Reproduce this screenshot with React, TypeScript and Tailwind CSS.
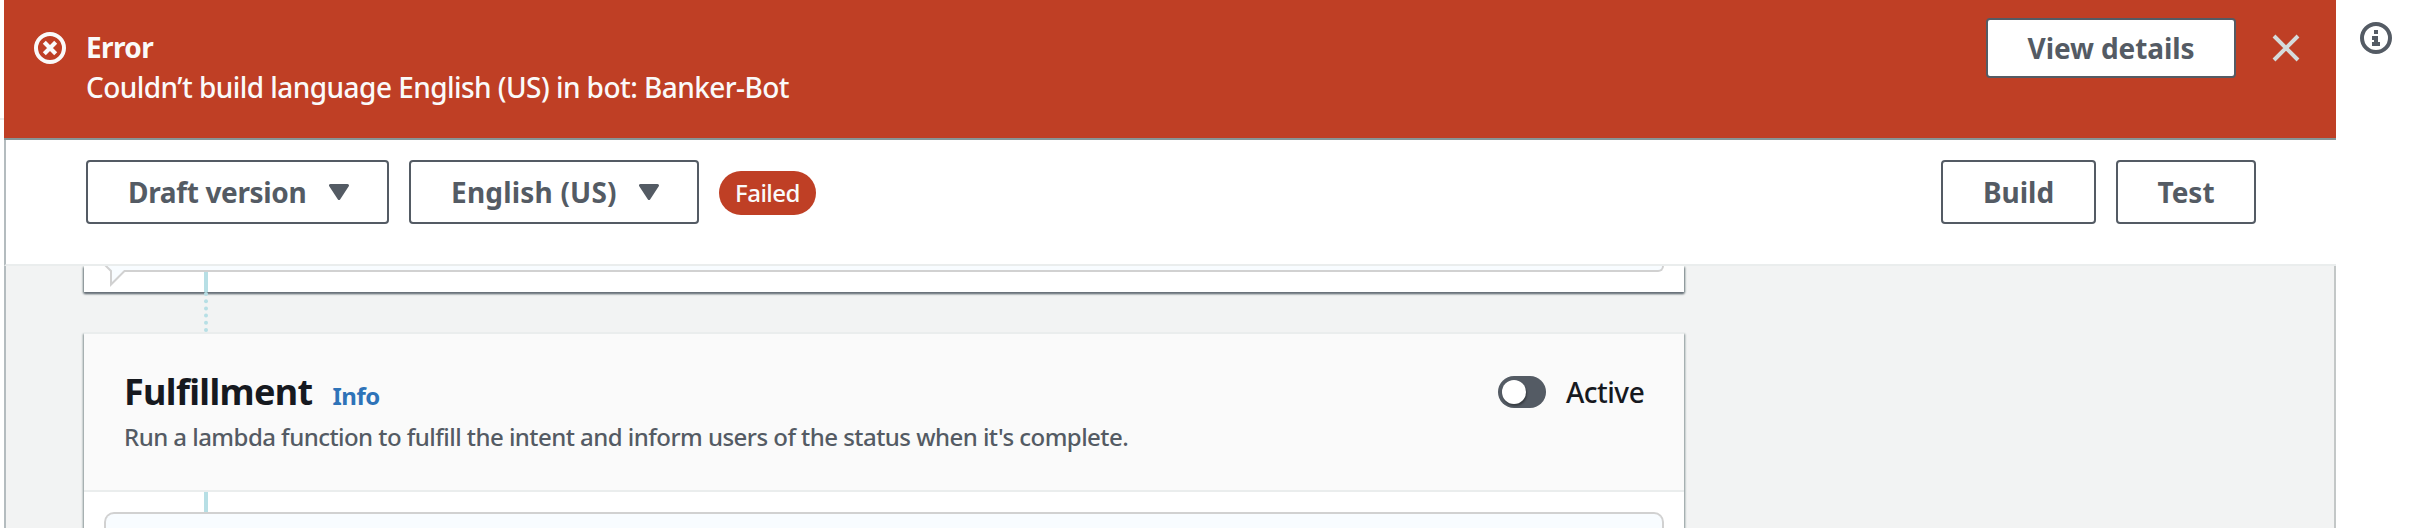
import type { ReactNode } from "react";

function ErrorIcon() {
  return (
    <svg className="mt-8 size-8 shrink-0" viewBox="0 0 32 32" fill="none" stroke="#fafafa">
      <circle cx="16" cy="16" r="14" strokeWidth="4" />
      <path d="M10.3 10.3 21.7 21.7 M21.7 10.3 10.3 21.7" strokeWidth="4.2" />
    </svg>
  );
}

function InfoIcon() {
  return (
    <svg className="size-8" viewBox="0 0 32 32" fill="#545b64">
      <circle cx="16" cy="16" r="14" fill="none" stroke="#545b64" strokeWidth="4" />
      <path d="M14 8h4v4h-4z M12 14h6v6h2v4h-8v-4h2v-2h-2z" />
    </svg>
  );
}

function CloseIcon() {
  return (
    <svg className="mt-[34px] ml-9 size-7 shrink-0" viewBox="0 0 28 28" fill="none" stroke="#d5dbdb" strokeWidth="4">
      <path d="M2 2 26 26 M26 2 2 26" />
    </svg>
  );
}

function Caret() {
  return (
    <svg className="h-4 w-5 shrink-0" viewBox="0 0 20 16" fill="#545b64" stroke="#545b64" strokeWidth="3" strokeLinejoin="round">
      <path d="M1.5 1.5h17L10 14.5z" />
    </svg>
  );
}

function Button({ className, children }: { className: string; children: ReactNode }) {
  return (
    <button
      className={
        "flex shrink-0 items-center rounded-[4px] border-2 border-[#545b64] bg-white text-[28px] font-bold whitespace-nowrap text-[#545b64] " +
        className
      }
    >
      {children}
    </button>
  );
}

export default function App() {
  return (
    <div className="flex h-[528px] w-[2414px] overflow-hidden bg-white font-['Noto_Sans',sans-serif]">
      <div className="w-1 shrink-0 pt-[118px]">
        <div className="h-0.5 bg-[#eaeded]" />
      </div>

      <main className="flex w-[2332px] shrink-0 flex-col">
        <header className="flex h-[140px] shrink-0 border-b-2 border-[#879596] bg-[#bf3f25] pl-[30px] text-[28px] leading-10 text-[#fafafa]">
          <ErrorIcon />
          <div className="ml-5 flex-1 pt-[27px]">
            <div className="font-bold tracking-[-0.6px]">
              <span>Error</span>
            </div>
            <div className="font-medium tracking-[-0.55px]">
              <span>Couldn’t build language English (US) in bot: Banker-Bot</span>
            </div>
          </div>
          <Button className="mt-[18px] h-[60px] w-[250px] justify-center tracking-[-0.1px]">
            <span>View details</span>
          </Button>
          <CloseIcon />
          <div className="w-9 shrink-0" />
        </header>

        <div className="flex h-[126px] shrink-0 items-start border-b-2 border-l-2 border-b-[#eaeded] border-l-[#b4bcbf] pt-5 pr-20 pl-20">
          <Button className="h-16 w-[303px] justify-between pr-[38px] pl-10 tracking-[-0.35px]">
            <span>Draft version</span>
            <Caret />
          </Button>
          <Button className="ml-5 h-16 w-[290px] justify-between pr-[38px] pl-10 tracking-[0.2px]">
            <span>English (US)</span>
            <Caret />
          </Button>
          <div className="mt-[11px] ml-5 flex h-11 w-[97px] items-center justify-center rounded-full bg-[#bf3f25] text-2xl font-medium tracking-[-0.5px] text-[#fafafa]">
            <span>Failed</span>
          </div>
          <div className="flex-1" />
          <Button className="h-16 w-[155px] justify-center">
            <span>Build</span>
          </Button>
          <Button className="ml-5 h-16 w-[140px] justify-center">
            <span>Test</span>
          </Button>
        </div>

        <div className="flex flex-1 flex-col border-r-2 border-l-2 border-r-[#c3c7c7] border-l-[#b4bcbf] bg-[#f2f3f3] pl-[78px]">
          <section className="h-[26px] w-[1600px] bg-white shadow-[0_2px_2px_0_#687078,1px_1px_2px_0_#879596,-1px_1px_2px_0_#879596] [clip-path:inset(0_-6px_-6px_-6px)]">
            <div className="flex">
              <svg className="h-[26px] w-[120px] shrink-0" viewBox="0 0 120 26">
                <path d="M20 -2 27 5V18.5L40.5 5H122V-2z" fill="#f8fcff" stroke="#d1d1d1" strokeWidth="2" />
              </svg>
              <div className="w-1">
                <div className="h-1.5 border-b-2 border-[#d1d1d1] bg-[#f8fcff]" />
                <div className="h-5 bg-[#b7dfe5]" />
              </div>
              <div className="h-1.5 w-[1456px] rounded-br-[10px] border-r-2 border-b-2 border-[#d1d1d1] bg-[#f8fcff]" />
            </div>
          </section>
          <svg className="z-10 ml-[120px] h-10 w-1" viewBox="0 0 4 40" fill="#b7dfe5">
            <circle cx="2" cy="2" r="2" />
            <circle cx="2" cy="9.2" r="2" />
            <circle cx="2" cy="16.4" r="2" />
            <circle cx="2" cy="23.6" r="2" />
            <circle cx="2" cy="30.8" r="2" />
            <circle cx="2" cy="38" r="2" />
          </svg>
          <section className="flex w-[1600px] flex-1 flex-col border-t-2 border-[#eaeded] bg-white shadow-[1px_2px_2px_0_#879596,-1px_2px_2px_0_#879596]">
            <div className="flex h-[158px] shrink-0 border-b-2 border-[#eaeded] bg-[#fafafa] pl-10">
              <div className="flex-1">
                <div className="mt-[35px] flex h-[46px] items-baseline leading-[46px]">
                  <h2 className="text-4xl leading-[46px] font-bold tracking-[-0.65px] text-[#16191f]">
                    <span>Fulfillment</span>
                  </h2>
                  <a className="ml-5 text-2xl leading-[46px] font-bold tracking-[-0.5px] text-[#2e73b8]">
                    <span>Info</span>
                  </a>
                </div>
                <p className="mt-1 text-2xl leading-9 font-medium tracking-[-0.54px] text-[#545b64]">
                  <span>Run a lambda function to fulfill the intent and inform users of the status when it's complete.</span>
                </p>
              </div>
              <div className="mt-[42px] flex h-8 w-[186px] items-center">
                <div className="h-8 w-12 rounded-full bg-[#545b64] p-1">
                  <div className="size-6 rounded-full bg-white shadow-[1px_2px_2px_0_rgba(0,0,0,0.35)]" />
                </div>
                <span className="ml-5 text-[28px] leading-8 font-medium tracking-[-0.5px] text-[#16191f]">Active</span>
              </div>
            </div>
            <div className="ml-[120px] h-5 w-1 shrink-0 bg-[#b7dfe5]" />
            <div className="mx-5 flex-1 rounded-t-[10px] border-2 border-b-0 border-[#d1d1d1] bg-[#f8fcff]" />
          </section>
        </div>
      </main>

      <aside className="flex flex-1 items-start pt-[22px] pl-6">
        <InfoIcon />
      </aside>
    </div>
  );
}
